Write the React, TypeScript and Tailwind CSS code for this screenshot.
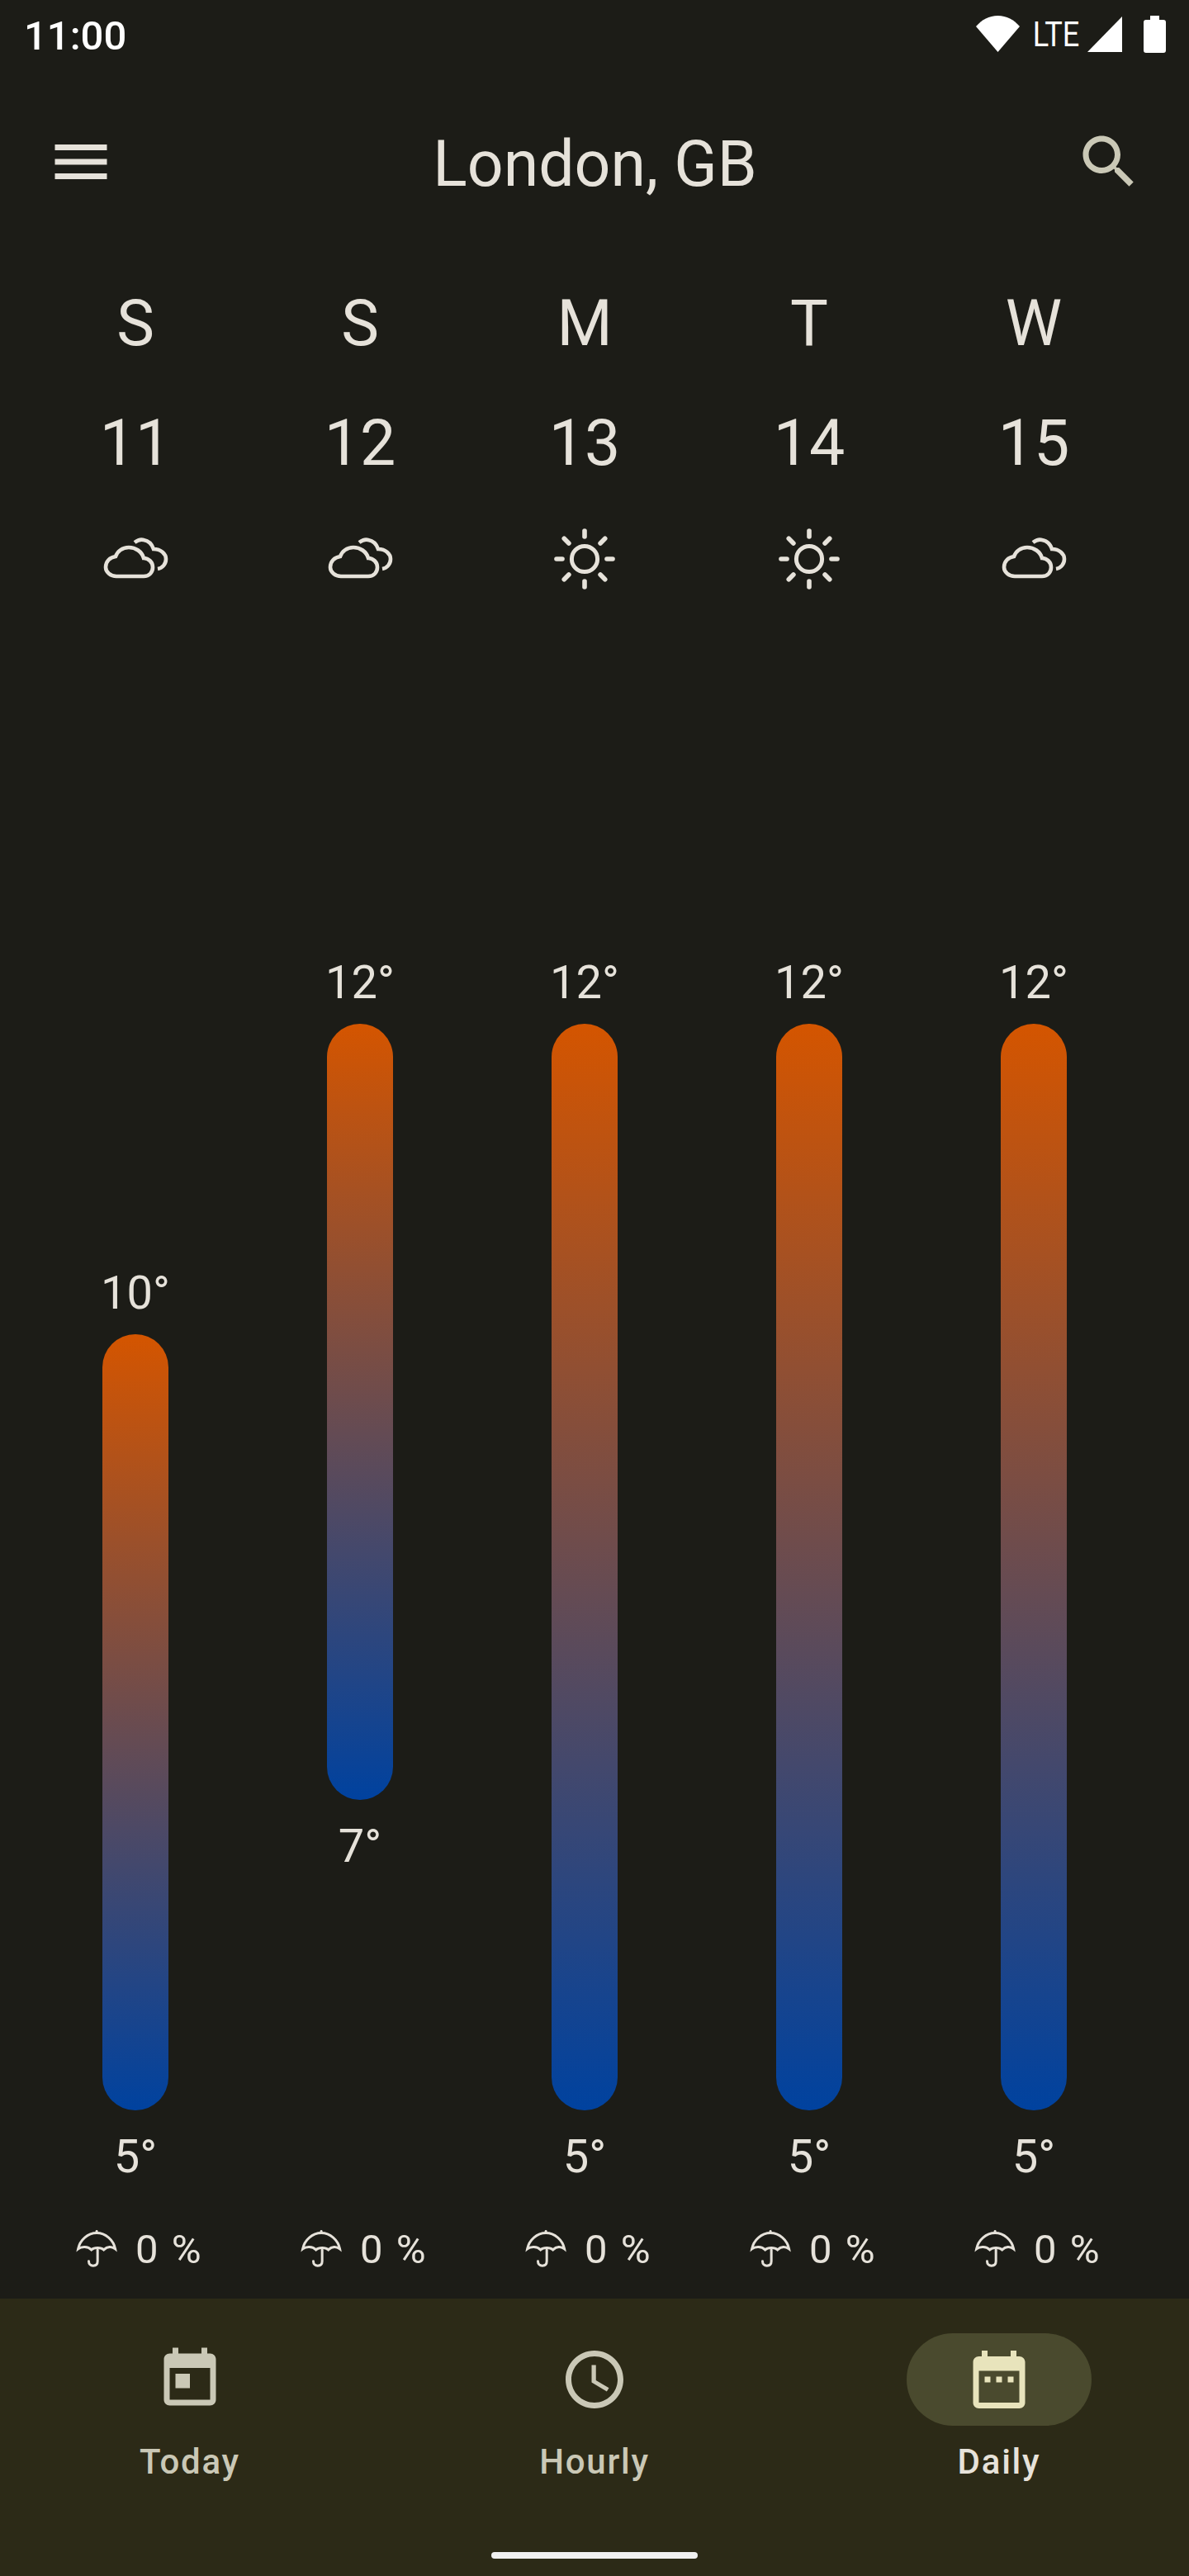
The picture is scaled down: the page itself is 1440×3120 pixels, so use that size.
import React from "react";

type Day = {
  letter: string;
  date: number;
  icon: "cloud" | "sun";
  high: number;
  low: number;
};

const days: Day[] = [
  { letter: "S", date: 11, icon: "cloud", high: 10, low: 5 },
  { letter: "S", date: 12, icon: "cloud", high: 12, low: 7 },
  { letter: "M", date: 13, icon: "sun", high: 12, low: 5 },
  { letter: "T", date: 14, icon: "sun", high: 12, low: 5 },
  { letter: "W", date: 15, icon: "cloud", high: 12, low: 5 },
];

// one degree on the chart, in px
const DEGREE = 188;
const MAX_TEMP = 12;

function CloudIcon() {
  return (
    <svg width="100" height="74" viewBox="0 0 100 74" fill="none" stroke="#e6e2da" strokeWidth="4.6">
      <path d="M27 58H60C67 58 71 53 71 47C71 41 66 36 60 36C58 28 50 23 42 23C34 23 28 28 26 34C19 35 14 40 14 47C14 53 20 58 27 58Z" />
      <path d="M49 17C53 14 57 13 60 14C66 15 70 19 72 25C81 25 87 31 87 37C87 43 83 48 77 49" />
    </svg>
  );
}

function SunIcon() {
  const rays = [0, 45, 90, 135, 180, 225, 270, 315];
  return (
    <svg width="96" height="90" viewBox="-48 -45 96 90" fill="none" stroke="#e6e2da">
      <circle r="15.6" strokeWidth="5" />
      {rays.map((angle) => (
        <line
          key={angle}
          x1="0"
          y1={angle % 90 === 0 ? -34 : -35}
          x2="0"
          y2="-27"
          strokeWidth="5.6"
          strokeLinecap="round"
          transform={`rotate(${angle})`}
        />
      ))}
    </svg>
  );
}

function UmbrellaIcon() {
  return (
    <svg width="70" height="56" viewBox="2 2 65.4 52.3" fill="none" stroke="#e6e2da" strokeWidth="2.8" strokeLinecap="round">
      <path d="M11 28C13 18 22 10 32 10C42 10 51 18 53 28C49 25 44 25 40 29C37 26 29 26 26 29C22 25 15 25 11 28Z" />
      <path d="M32 10V8" />
      <path d="M33 29V42C33 46 31 47 28 47C25 47 23 45 23 42" />
    </svg>
  );
}

function NavIcon({ d, color }: { d: string; color: string }) {
  return (
    <svg width="84" height="84" viewBox="0 0 24 24" fill={color}>
      <path d={d} />
    </svg>
  );
}

function NavItem({
  label,
  d,
  active,
}: {
  label: string;
  d: string;
  active?: boolean;
}) {
  return (
    <div className="flex w-[224px] flex-col items-center">
      <div className={`flex h-[112px] w-[224px] items-center justify-center rounded-full ${active ? "bg-[#4a4a2e]" : ""}`}>
        <NavIcon d={d} color={active ? "#e8e4bc" : "#cac8b6"} />
      </div>
      <span
        className={`mt-[14px] text-[42px] leading-[60px] font-medium tracking-[1.75px] ${active ? "text-[#e6e2da]" : "text-[#cac8b6]"}`}
      >
        {label}
      </span>
    </div>
  );
}

export default function App() {
  return (
    <div className="flex h-[3120px] w-[1440px] flex-col overflow-hidden bg-[#1c1c17] font-['Roboto',sans-serif] text-[#e6e2da]">
      {/* status bar */}
      <div className="flex h-[88px] items-start justify-between pr-[28px] pl-[29px]">
        <span className="mt-[15px] text-[49px] leading-[58px] font-medium text-white">11:00</span>
        <div className="mt-[19px] flex items-start">
          <svg width="53" height="44" viewBox="0 0 53 44" fill="white">
            <path d="M0 13C7 5 16 0 26.5 0C37 0 46 5 53 13L26.5 44Z" />
          </svg>
          <span className="mt-[-3px] ml-[1px] block w-[86px] origin-center scale-x-[0.84] text-center text-[43px] leading-[50px] text-white">LTE</span>
          <svg className="ml-[-5px]" width="42" height="44" viewBox="0 0 42 44" fill="white">
            <path d="M0 44L42 1V44Z" />
          </svg>
          <svg className="ml-[26px]" width="27" height="45" viewBox="0 0 27 45" fill="white">
            <path d="M8 0H19V5H24C26 5 27 6 27 8V42C27 44 26 45 24 45H3C1 45 0 44 0 42V8C0 6 1 5 3 5H8Z" />
          </svg>
        </div>
      </div>

      {/* top app bar */}
      <div className="mt-[52px] flex h-[112px] items-center justify-between pr-[56px] pl-[56px]">
        <svg width="84" height="84" viewBox="0 0 24 24" fill="#e6e2da">
          <path d="M3 18h18v-2H3v2zm0-5h18v-2H3v2zm0-7v2h18V6H3z" />
        </svg>
        <h1 className="mt-[5px] text-[77px] leading-[112px] font-normal">London, GB</h1>
        <svg className="mr-[-1px]" width="84" height="84" viewBox="0 0 24 24" fill="#cac8b6">
          <path d="M15.5 14h-.79l-.28-.27C15.41 12.59 16 11.11 16 9.5 16 5.91 13.09 3 9.5 3S3 5.91 3 9.5 5.91 16 9.5 16c1.61 0 3.09-.59 4.23-1.57l.27.28v.79l5 4.99L20.49 19l-4.99-5zm-6 0C7.01 14 5 11.99 5 9.5S7.01 5 9.5 5 14 7.01 14 9.5 11.99 14 9.5 14z" />
        </svg>
      </div>

      {/* day headers */}
      <div className="mt-[90px] grid grid-cols-[repeat(5,272px)] pl-[28px]">
        {days.map((day) => (
          <div key={day.date} className="flex flex-col items-center">
            <span className="text-[77px] leading-[100px]">{day.letter}</span>
            <span className="mt-[45px] text-[77px] leading-[100px]">{day.date}</span>
            <div className="mt-[43px] flex h-[94px] items-center justify-center">
              {day.icon === "cloud" ? <CloudIcon /> : <SunIcon />}
            </div>
          </div>
        ))}
      </div>

      {/* temperature bars */}
      <div className="mt-[428px] grid h-[1494px] grid-cols-[repeat(5,272px)] pl-[28px]">
        {days.map((day) => (
          <div key={day.date} className="flex flex-col items-center">
            <span
              className="text-[56px] leading-[72px]"
              style={{ marginTop: (MAX_TEMP - day.high) * DEGREE + 2 }}
            >
              {day.high}°
            </span>
            <div
              className="mt-[14px] w-[80px] rounded-full bg-linear-to-b/srgb from-[#d45500] to-[#00429f]"
              style={{ height: (day.high - day.low) * DEGREE }}
            />
            <span className="mt-[20px] text-[56px] leading-[72px]">{day.low}°</span>
          </div>
        ))}
      </div>

      {/* chance of rain */}
      <div className="mt-[47px] grid h-[60px] grid-cols-[repeat(5,272px)] pl-[28px]">
        {days.map((day) => (
          <div key={day.date} className="flex items-center pl-[57px]">
            <UmbrellaIcon />
            <span className="mt-[2px] ml-[9px] text-[49px] leading-[60px] tracking-[2px]">0 %</span>
          </div>
        ))}
      </div>

      {/* bottom navigation */}
      <div className="relative mt-[31px] flex-1 bg-[#2c2a17]">
        <div className="flex justify-between px-[118px] pt-[42px]">
          <NavItem
            label="Today"
            d="M19 3h-1V1h-2v2H8V1H6v2H5c-1.11 0-1.99.9-1.99 2L3 19c0 1.1.89 2 2 2h14c1.1 0 2-.9 2-2V5c0-1.1-.9-2-2-2zm0 16H5V8h14v11zM7 10h5v5H7z"
          />
          <NavItem
            label="Hourly"
            d="M11.99 2C6.47 2 2 6.48 2 12s4.47 10 9.99 10C17.52 22 22 17.52 22 12S17.52 2 11.99 2zM12 20c-4.42 0-8-3.58-8-8s3.58-8 8-8 8 3.58 8 8-3.58 8-8 8zm.5-13H11v6l5.25 3.15.75-1.23-4.5-2.67z"
          />
          <NavItem
            label="Daily"
            active
            d="M9 11H7v2h2v-2zm4 0h-2v2h2v-2zm4 0h-2v2h2v-2zm2-7h-1V2h-2v2H8V2H6v2H5c-1.11 0-1.99.9-1.99 2L3 20c0 1.1.89 2 2 2h14c1.1 0 2-.9 2-2V6c0-1.1-.9-2-2-2zm0 16H5V9h14v11z"
          />
        </div>
        <div className="absolute bottom-[21px] left-[595px] h-[8px] w-[250px] rounded-full bg-[#f0f0f0]" />
      </div>
    </div>
  );
}
